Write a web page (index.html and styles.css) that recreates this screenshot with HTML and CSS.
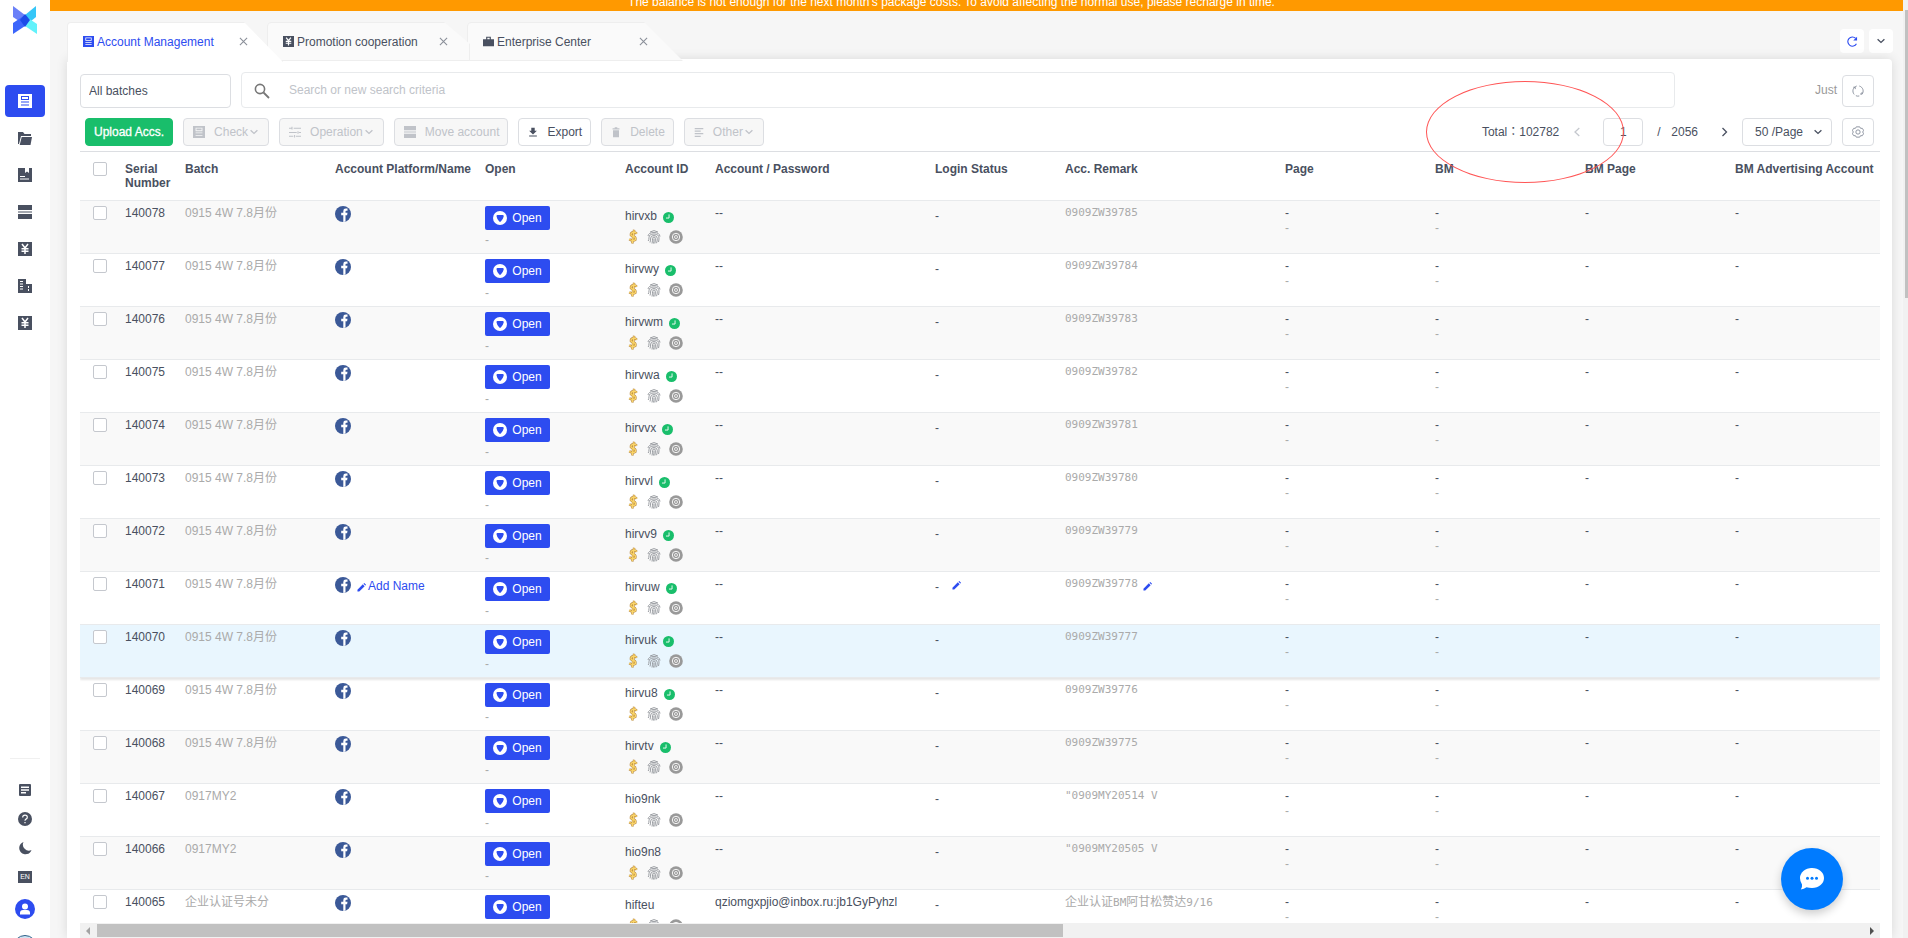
FILE: index.html
```html
<!DOCTYPE html>
<html lang="en">
<head>
    <meta charset="UTF-8">
    <meta name="viewport" content="width=device-width, initial-scale=1.0">
    <title>Account Management</title>
    <link rel="stylesheet" href="styles.css">
</head>
<body>

    <!-- shared icons -->
    <svg class="sprite" aria-hidden="true">
        <symbol id="i-doc" viewBox="0 0 14 14"><path fill="currentColor" fill-rule="evenodd" d="M0 0h14v14H0zM3 2v4h8V2zM3 7.500h8v1H3zM3 10.500h8v1H3zM4 3h6v2H4z"/></symbol>
        <symbol id="i-folder" viewBox="0 0 14 14"><path fill="currentColor" d="M0 1h5l1.500 2H13v2H3L1 13H0zM3.700 6H14l-1.500 8H1.700z"/></symbol>
        <symbol id="i-book" viewBox="0 0 14 14"><path fill="currentColor" fill-rule="evenodd" d="M0 0h7v5l2-1.500L11 5V0h3v14H0zM2 8v1h5V8zM2 10.500v1h9v-1z"/></symbol>
        <symbol id="i-stack" viewBox="0 0 14 14"><path fill="currentColor" d="M0 0h14v5H0zM0 6.500h14v1H0zM0 9h14v5H0z"/></symbol>
        <symbol id="i-yen" viewBox="0 0 14 14"><path fill="currentColor" d="M0 0h14v14H0z"/><path fill="none" stroke="#fff" stroke-width="1.500" d="M4 2l3 4 3-4M7 6v6M3.500 6.800h7M3.500 9.200h7"/></symbol>
        <symbol id="i-build" viewBox="0 0 14 14"><path fill="currentColor" fill-rule="evenodd" d="M0 0h8v5h6v9H0zM2 2v1h3V2zM2 4.500v1h3v-1zM2 7v1h3V7zM2 9.500v1h3v-1zM10 7v2h1V7zM10 10v2h1v-2z"/></symbol>
        <symbol id="i-bag" viewBox="0 0 14 14"><path fill="currentColor" fill-rule="evenodd" d="M4 4V1h6v3h4v9H0V4zM5.500 4h3V2.300h-3z"/></symbol>
        <symbol id="i-list" viewBox="0 0 14 14"><path fill="currentColor" fill-rule="evenodd" d="M2 1h10q1 0 1 1v10q0 1-1 1H2q-1 0-1-1V2q0-1 1-1zM3 3.500V5h8V3.500zM3 6.200v1.500h8V6.200zM3 9v1.500h5V9z"/></symbol>
        <symbol id="i-help" viewBox="0 0 14 14"><circle cx="7" cy="7" r="7" fill="currentColor"/><path fill="none" stroke="#fff" stroke-width="1.200" d="M4.700 5.500q0-2.300 2.300-2.300t2.300 2q0 1.200-1.300 1.900-1 .6-1 1.700M7 10v1.300"/></symbol>
        <symbol id="i-moon" viewBox="0 0 14 14"><path fill="currentColor" d="M5.500 1A6.300 6.300 0 1 0 13.500 9 6 6 0 0 1 5.500 1z"/></symbol>
        <symbol id="i-user" viewBox="0 0 20 20"><circle cx="10" cy="10" r="10" fill="#2d4cf0"/><circle cx="10" cy="7.500" r="3" fill="#fff"/><path fill="#fff" d="M5 15.500v-1.500q0-3 3-3h4q3 0 3 3v1.500z"/></symbol>
        <symbol id="i-close" viewBox="0 0 10 10"><path fill="none" stroke="currentColor" stroke-width="1.200" d="M1 1l8 8M9 1L1 9"/></symbol>
        <symbol id="i-down" viewBox="0 0 8 8"><path fill="none" stroke="currentColor" stroke-width="1.300" d="M.6 2.200L4 5.400l3.400-3.200"/></symbol>
        <symbol id="i-left" viewBox="0 0 8 10"><path fill="none" stroke="currentColor" stroke-width="1.300" d="M6.300 1L2 5l4.300 4"/></symbol>
        <symbol id="i-right" viewBox="0 0 8 10"><path fill="none" stroke="currentColor" stroke-width="1.300" d="M2.500 1L6.500 5l-4 4"/></symbol>
        <symbol id="i-sliders" viewBox="0 0 14 14"><path fill="none" stroke="currentColor" stroke-width="1.200" d="M0 2.500h3M5.500 2.500H14M0 7.500h9M11.500 7.500H14M0 12h5M8 12h6M3.500 1v3M10.500 6v3M6.500 10.500v3"/></symbol>
        <symbol id="i-export" viewBox="0 0 14 14"><path fill="currentColor" d="M5 2h4v3.500h2.500L7 10 2.500 5.500H5zM2.500 11h9v1.300h-9z"/></symbol>
        <symbol id="i-trash" viewBox="0 0 14 14"><path fill="currentColor" d="M3 2.500h2.500V1.500h3v1H11V4H3zM3.500 5h7v8h-7z"/></symbol>
        <symbol id="i-lines" viewBox="0 0 14 14"><path fill="none" stroke="currentColor" stroke-width="1.400" d="M2 3h10M2 6h7M2 9h10M2 12h7"/></symbol>
        <symbol id="i-fb" viewBox="0 0 16 16"><circle cx="8" cy="8" r="8" fill="#3b5998"/><path fill="#fff" d="M8.300 16V9.200H6.200V6.800h2.100V5q0-2.400 2.500-2.400h1.700v2.200h-1.200q-.8 0-.8.8v1.200h2l-.4 2.400h-1.600v6.300z"/></symbol>
        <symbol id="i-browser" viewBox="0 0 14 14"><circle cx="7" cy="7" r="7" fill="#fff"/><path fill="#2d4cf0" d="M4.500 4h5.200q1.500 0 1 1.500Q9.800 9 7.800 10.400q-.8.500-1.500 0Q4 8.600 3.500 5.300 3.400 4 4.500 4z"/></symbol>
        <symbol id="i-clock" viewBox="0 0 10 10"><circle cx="5" cy="5" r="5" fill="#19be6b"/><path fill="none" stroke="#fff" stroke-width=".8" d="M5.500 2.200v3.300H2.700"/></symbol>
        <symbol id="i-dollar" viewBox="0 0 12 16"><path fill="none" stroke="#b98a45" stroke-width="2.600" d="M10 5Q8.500 3 6 3.500T3.800 6.500Q5 7.800 7 8.200T8.500 11.500Q6 13.500 2 11M7.200.8L5.200 15.500"/><path fill="none" stroke="#fbd668" stroke-width="1.400" d="M10 5Q8.500 3 6 3.500T3.800 6.500Q5 7.800 7 8.200T8.500 11.500Q6 13.500 2 11M7.200 1.300L5.200 15"/></symbol>
        <symbol id="i-finger" viewBox="0 0 14 14"><path fill="none" stroke="#909399" stroke-width=".9" d="M3 2Q7-.8 11 2M1 6Q1.500 2.500 7 2.500T13 6.500M1.200 11Q2 10 2 7.500 2 4 7 4t5 4q0 2-.5 4M3 12.500Q3.700 10 3.700 8 3.700 5.500 7 5.500t3.300 3q0 2.500-.8 4.700M5 13.500q.6-3 .6-5Q5.600 7 7 7t1.400 1.500q0 2.500-.6 5M7 8.500q0 3-.5 5"/></symbol>
        <symbol id="i-target" viewBox="0 0 14 14"><circle cx="7" cy="7" r="6.800" fill="#999"/><circle cx="7" cy="7" r="3.700" fill="none" stroke="#fff" stroke-width=".9"/><circle cx="7" cy="7" r="1.500" fill="none" stroke="#fff" stroke-width=".8"/></symbol>
        <symbol id="i-pen" viewBox="0 0 10 10"><path fill="#2d4cf0" d="M.5 7.500l6-6 2 2-6 6H.5zM7.200.9l.9-.9 2 2-.9.9z"/></symbol>
    </svg>

    <aside class="sidebar">
        <svg class="logo" viewBox="0 0 26 30">
            <path fill="#6a80f8" d="M1 1l12 9v10L1 12z"/>
            <path fill="#35c6f8" d="M24 1L13 10v11l11-9z"/>
            <path fill="#3c66fb" d="M1 29l12-8V10L1 18z"/>
            <path fill="#62f2fb" d="M25 29l-12-8V11l12 8z"/>
            <path fill="#1c4be8" d="M13 9l5 6-5 7-5-7z"/>
        </svg>
        <nav class="side-nav">
            <a href="#" class="active" title="Accounts"><svg><use href="#i-doc"/></svg></a>
            <a href="#" title="Files"><svg><use href="#i-folder"/></svg></a>
            <a href="#" title="Records"><svg><use href="#i-book"/></svg></a>
            <a href="#" title="Servers"><svg><use href="#i-stack"/></svg></a>
            <a href="#" title="Promotion"><svg><use href="#i-yen"/></svg></a>
            <a href="#" title="Enterprise"><svg><use href="#i-build"/></svg></a>
            <a href="#" title="Billing"><svg><use href="#i-yen"/></svg></a>
        </nav>
        <div class="side-foot">
            <a href="#" title="Notes"><svg><use href="#i-list"/></svg></a>
            <a href="#" title="Help"><svg><use href="#i-help"/></svg></a>
            <a href="#" title="Dark mode"><svg><use href="#i-moon"/></svg></a>
            <a href="#" title="Language"><span class="lang">EN</span></a>
            <a href="#" class="user" title="Profile"><svg><use href="#i-user"/></svg></a>
            <span class="ring"></span>
        </div>
    </aside>

    <main class="main">
        <div class="banner">The balance is not enough for the next month's package costs. To avoid affecting the normal use, please recharge in time.</div>

        <div class="tabs-bar">
            <div class="tab active">
                <a href="#"><svg><use href="#i-doc"/></svg>Account Management</a>
                <button type="button" aria-label="Close"><svg><use href="#i-close"/></svg></button>
            </div>
            <div class="tab second">
                <a href="#"><svg><use href="#i-yen"/></svg>Promotion cooperation</a>
                <button type="button" aria-label="Close"><svg><use href="#i-close"/></svg></button>
            </div>
            <div class="tab">
                <a href="#"><svg><use href="#i-bag"/></svg>Enterprise Center</a>
                <button type="button" aria-label="Close"><svg><use href="#i-close"/></svg></button>
            </div>
            <div class="tab-tools">
                <button type="button" aria-label="Refresh">
                    <svg class="reload" viewBox="0 0 12 12"><path fill="none" stroke="currentColor" stroke-width="1.200" d="M10.300 8.500A5 5 0 1 1 9.500 2.600"/><path fill="currentColor" d="M11 .8V5H6.800z"/></svg>
                </button>
                <button type="button" aria-label="More"><svg><use href="#i-down"/></svg></button>
            </div>
        </div>

        <section class="panel">
            <div class="search-row">
                <select class="batches" aria-label="Batch">
                    <option>All batches</option>
                </select>
                <label class="search">
                    <svg viewBox="0 0 16 16"><circle cx="6" cy="6" r="4.600" fill="none" stroke="currentColor" stroke-width="1.600"/><path stroke="currentColor" stroke-width="1.800" d="M9.500 9.500l5.500 5.500"/></svg>
                    <input type="text" placeholder="Search or new search criteria">
                </label>
                <span class="just">Just</span>
                <button type="button" class="square tall" aria-label="Sync">
                    <svg viewBox="0 0 14 14"><path fill="none" stroke="currentColor" d="M5.500 1.200A6 6 0 0 0 2.600 11M4.500 12.500a6 6 0 0 0 4 .3M11.400 11.100A6 6 0 0 0 8.500 1.200M1.500 2.600h2.300v2.200M12.800 9.400h-2.300v2.200"/></svg>
                </button>
            </div>

            <div class="toolbar">
                <button type="button" class="btn upload">Upload Accs.</button>
                <button type="button" class="btn wide" disabled><svg><use href="#i-doc"/></svg>Check<svg class="caret"><use href="#i-down"/></svg></button>
                <button type="button" class="btn wide" disabled><svg><use href="#i-sliders"/></svg>Operation<svg class="caret"><use href="#i-down"/></svg></button>
                <button type="button" class="btn wide" disabled><svg><use href="#i-stack"/></svg>Move account</button>
                <button type="button" class="btn"><svg><use href="#i-export"/></svg>Export</button>
                <button type="button" class="btn" disabled><svg><use href="#i-trash"/></svg>Delete</button>
                <button type="button" class="btn" disabled><svg><use href="#i-lines"/></svg>Other<svg class="caret"><use href="#i-down"/></svg></button>

                <div class="pager">
                    <span class="total">Total：102782</span>
                    <button type="button" class="arrow" aria-label="Previous page" disabled><svg><use href="#i-left"/></svg></button>
                    <input type="text" class="page-no" value="1" aria-label="Page number">
                    <span class="slash">/</span>
                    <span class="pages">2056</span>
                    <button type="button" class="arrow" aria-label="Next page"><svg><use href="#i-right"/></svg></button>
                    <div class="page-size">
                        <select aria-label="Page size"><option>50 /Page</option></select>
                        <svg><use href="#i-down"/></svg>
                    </div>
                    <button type="button" class="square" aria-label="Settings">
                        <svg viewBox="0 0 14 14"><path fill="none" stroke="currentColor" d="M5 1h4l1 1.700h2L13.500 5l-1 2 1 2-1.500 2.300h-2L9 13H5l-1-1.700H2L.5 9l1-2-1-2L2 2.700h2z"/><circle cx="7" cy="7" r="2.500" fill="none" stroke="currentColor"/></svg>
                    </button>
                </div>
            </div>

            <div class="table-wrap">
                <table>
                    <colgroup>
                        <col class="w40"><col class="w60"><col class="w150"><col class="w150"><col class="w140"><col class="w90"><col class="w220">
                        <col class="w130"><col class="w220"><col class="w150"><col class="w150"><col class="w150"><col class="w150">
                    </colgroup>
                    <thead>
                        <tr>
                            <th class="check"><input type="checkbox" aria-label="Select all"></th>
                            <th>Serial Number</th>
                            <th>Batch</th>
                            <th>Account Platform/Name</th>
                            <th>Open</th>
                            <th>Account ID</th>
                            <th>Account / Password</th>
                            <th>Login Status</th>
                            <th>Acc. Remark</th>
                            <th>Page</th>
                            <th>BM</th>
                            <th>BM Page</th>
                            <th>BM Advertising Account</th>
                        </tr>
                    </thead>
                    <tbody id="rows"></tbody>
                </table>
            </div>

            <div class="h-scroll">
                <i class="to-left"></i>
                <div class="thumb"></div>
                <i class="to-right"></i>
            </div>
        </section>
    </main>

    <div class="v-scroll"><div class="thumb"></div></div>

    <div class="mark"></div>

    <button type="button" class="chat" aria-label="Chat">
        <svg viewBox="0 0 24 22"><path fill="#fff" d="M12 0c7 0 12 4.500 12 10s-5 10-12 10q-3 0-5.500-.8Q4 21 .8 21.500 2.500 19 2 16.500 0 13.500 0 10 0 4.500 12 0z"/><path fill="#fff" d="M0 10.500C0 4.500 5 0 12 0l4 6z"/><circle cx="7.500" cy="10.200" r="1.500" fill="#007bff"/><circle cx="12" cy="10.200" r="1.500" fill="#007bff"/><circle cx="16.500" cy="10.200" r="1.500" fill="#007bff"/></svg>
    </button>

    <script>
        // serial, batch, account id, verified, password, remark
        const accounts = [
            [140078, '0915 4W 7.8月份', 'hirvxb', true, '--', '0909ZW39785'],
            [140077, '0915 4W 7.8月份', 'hirvwy', true, '--', '0909ZW39784'],
            [140076, '0915 4W 7.8月份', 'hirvwm', true, '--', '0909ZW39783'],
            [140075, '0915 4W 7.8月份', 'hirvwa', true, '--', '0909ZW39782'],
            [140074, '0915 4W 7.8月份', 'hirvvx', true, '--', '0909ZW39781'],
            [140073, '0915 4W 7.8月份', 'hirvvl', true, '--', '0909ZW39780'],
            [140072, '0915 4W 7.8月份', 'hirvv9', true, '--', '0909ZW39779'],
            [140071, '0915 4W 7.8月份', 'hirvuw', true, '--', '0909ZW39778'],
            [140070, '0915 4W 7.8月份', 'hirvuk', true, '--', '0909ZW39777'],
            [140069, '0915 4W 7.8月份', 'hirvu8', true, '--', '0909ZW39776'],
            [140068, '0915 4W 7.8月份', 'hirvtv', true, '--', '0909ZW39775'],
            [140067, '0917MY2', 'hio9nk', false, '--', '"0909MY20514 V'],
            [140066, '0917MY2', 'hio9n8', false, '--', '"0909MY20505 V'],
            [140065, '企业认证号未分', 'hifteu', false, 'qziomgxpjio@inbox.ru:jb1GyPyhzl', '企业认证BM阿甘松赞达9/16']
        ];
        const editing = 140071;
        const current = 140070;

        const icon = (name, cls) => `<svg class="${cls}"><use href="#i-${name}"/></svg>`;
        const pen = icon('pen', 'pen');
        const cjk = text => text.replace(/[\u4e00-\u9fff]+/g, '<span class="cjk">$&</span>');

        document.getElementById('rows').innerHTML = accounts.map(([serial, batch, id, verified, password, remark]) => {
            const edit = serial === editing;
            return `
            <tr class="${serial === current ? 'current' : ''}">
                <td class="check"><input type="checkbox" aria-label="Select ${serial}"></td>
                <td>${serial}</td>
                <td class="muted">${batch}</td>
                <td><div class="platform">${icon('fb', 'fb')}${edit ? `<a href="#">${pen}Add Name</a>` : ''}</div></td>
                <td><button type="button" class="open">${icon('browser', 'browser')}Open</button><div class="sub">-</div></td>
                <td>
                    <div class="acc-id">${id}${verified ? icon('clock', 'clock') : ''}</div>
                    <div class="acc-icons">${icon('dollar', 'dollar')}${icon('finger', 'round')}${icon('target', 'round')}</div>
                </td>
                <td>${password}</td>
                <td><div class="login">-${edit ? pen : ''}</div></td>
                <td class="remark">${cjk(remark)}${edit ? pen : ''}</td>
                <td>-<div class="light">-</div></td>
                <td>-<div class="light">-</div></td>
                <td>-</td>
                <td>-</td>
            </tr>`;
        }).join('');
    </script>

</body>
</html>
```
FILE: styles.css
```css
* {
box-sizing: border-box;
}

body {
margin: 0;
height: 100vh;
display: flex;
overflow: hidden;
background-color: #f6f6f6;
color: #495060;
font-family: "Liberation Sans", Arial, "Noto Sans CJK SC", sans-serif;
font-size: 12px;
line-height: 14px;
}

a {
color: inherit;
text-decoration: none;
}

button,
input,
select {
font: inherit;
color: inherit;
margin: 0;
padding: 0;
}

button {
cursor: pointer;
}

svg {
width: 14px;
height: 14px;
flex: none;
}

.sprite {
position: absolute;
width: 0;
height: 0;
}

/* left sidebar */

.sidebar {
width: 50px;
flex: none;
display: flex;
flex-direction: column;
align-items: center;
background-color: #fff;
}

.logo {
width: 26px;
height: 30px;
margin-top: 5px;
}

.side-nav {
display: flex;
flex-direction: column;
gap: 5px;
margin-top: 50px;
}

.side-nav a {
width: 40px;
height: 32px;
display: flex;
align-items: center;
justify-content: center;
border-radius: 4px;
}

.side-nav .active {
background-color: #2d4cf0;
color: #fff;
}

.side-foot {
width: 30px;
margin-top: auto;
margin-bottom: -21px;
padding-top: 16px;
display: flex;
flex-direction: column;
align-items: center;
border-top: 1px solid #f0f0f0;
}

.side-foot a {
height: 29px;
display: flex;
align-items: center;
}

.side-foot .user {
height: 36px;
}

.user svg {
width: 20px;
height: 20px;
}

.lang {
width: 14px;
background-color: #495060;
color: #fff;
font-size: 7px;
line-height: 12px;
text-align: center;
}

.ring {
width: 24px;
height: 24px;
margin-top: 8px;
border: 1px solid #2c5f88;
border-radius: 50%;
background-color: #cfe3f2;
}

/* main area */

.main {
flex: 1;
min-width: 0;
display: flex;
flex-direction: column;
}

.banner {
height: 11px;
padding-right: 50px;
overflow: hidden;
background-color: #f90;
color: #fff;
line-height: 5px;
text-align: center;
}

.tabs-bar {
display: flex;
height: 48px;
padding: 11px 10px 0 17px;
}

.tab {
position: relative;
z-index: 1;
width: 200px;
display: flex;
align-items: center;
justify-content: space-between;
padding: 2px 19px 0 16px;
}

.tab::before {
content: "";
position: absolute;
z-index: -1;
top: 0;
left: 0;
width: 214px;
height: 100%;
background-color: #fafafa;
border: 1px solid #eee;
border-radius: 4px 0 0 0;
clip-path: polygon(0 0, 177px 0, 100% 100%, 0 100%);
}

.tab.second {
z-index: 2;
}

.tab.second::before {
width: 201px;
clip-path: polygon(0 0, 177px 0, 100% 22px, 100% 100%, 0 100%);
}

.tab.active {
z-index: 3;
color: #2d4cf0;
}

.tab.active::before {
height: 39px;
background-color: #fff;
border-bottom: none;
}

.tab a {
display: flex;
align-items: center;
gap: 3px;
}

.tab a svg {
width: 11px;
height: 11px;
}

.tab button {
display: flex;
border: none;
background: none;
color: #8a8f99;
}

.tab button svg {
width: 9px;
height: 9px;
}

.tab-tools {
display: flex;
gap: 5px;
margin-left: auto;
padding-top: 7px;
}

.tab-tools button {
width: 24px;
height: 24px;
display: flex;
align-items: center;
justify-content: center;
border: none;
border-radius: 4px;
background-color: #fff;
}

.tab-tools svg {
width: 8px;
height: 8px;
}

.tab-tools .reload {
width: 11px;
height: 11px;
color: #2d4cf0;
}

.panel {
flex: 1;
min-height: 0;
display: flex;
flex-direction: column;
margin: 0 11px 0 17px;
padding: 13px 12px 0 13px;
background-color: #fff;
border-radius: 0 4px 0 0;
box-shadow: 0 0 12px rgba(0, 0, 0, 0.12);
}

.search-row {
display: flex;
align-items: center;
height: 36px;
padding-right: 6px;
}

.batches {
appearance: none;
width: 151px;
height: 34px;
margin-top: 2px;
padding: 0 8px;
border: 1px solid #dcdee2;
border-radius: 4px;
background-color: #fff;
}

.search {
flex: 1;
max-width: 1434px;
height: 36px;
margin-left: 10px;
padding: 0 12px;
display: flex;
align-items: center;
gap: 19px;
border: 1px solid #e8eaec;
border-radius: 4px;
color: #777;
}

.search svg {
width: 16px;
height: 16px;
margin-top: 2px;
}

.search input {
flex: 1;
border: none;
outline: none;
}

.search input::placeholder {
color: #c0c3c9;
}

.just {
margin-left: auto;
margin-right: 5px;
color: #999;
}

.square {
width: 32px;
height: 28px;
display: flex;
align-items: center;
justify-content: center;
border: 1px solid #dcdee2;
border-radius: 4px;
background-color: #fff;
color: #808695;
}

.square.tall {
height: 32px;
margin-top: 2px;
}

.square svg {
width: 12px;
height: 12px;
}

/* toolbar */

.toolbar {
display: flex;
align-items: center;
gap: 10px;
padding: 10px 6px 5px 5px;
border-bottom: 1px solid #dcdee2;
}

.btn {
height: 28px;
display: flex;
align-items: center;
padding: 0 8px;
border: 1px solid #dcdee2;
border-radius: 4px;
background-color: #fff;
white-space: nowrap;
}

.btn svg {
width: 12px;
height: 12px;
margin-right: 8px;
}

.btn.wide {
padding-left: 9px;
}

.btn.wide svg {
margin-right: 9px;
}

.btn svg.caret {
width: 8px;
height: 8px;
margin: 0 2px;
}

.btn:disabled {
background-color: #f7f7f7;
color: #c0c3c9;
cursor: default;
}

.btn.upload {
border-color: #19be6b;
background-color: #19be6b;
color: #fff;
-webkit-text-stroke: 0.3px #fff;
}

.pager {
display: flex;
align-items: center;
margin-left: auto;
}

.total {
font-family: "Liberation Sans", Arial, "Noto Sans CJK TC", sans-serif;
}

.arrow {
width: 36px;
height: 28px;
display: flex;
align-items: center;
justify-content: center;
border: none;
background: none;
}

.arrow:disabled {
color: #c5c8ce;
}

.arrow svg {
width: 8px;
height: 10px;
}

.page-no {
width: 40px;
height: 28px;
margin-left: 8px;
border: 1px solid #dcdee2;
border-radius: 4px;
text-align: center;
}

.slash {
width: 28px;
padding-left: 14px;
}

.pages {
margin-right: 8px;
}

.page-size {
position: relative;
margin-right: 10px;
}

.page-size select {
appearance: none;
width: 90px;
height: 28px;
padding: 0 12px;
border: 1px solid #dcdee2;
border-radius: 4px;
background-color: #fff;
}

.page-size svg {
position: absolute;
top: 10px;
right: 10px;
width: 8px;
height: 8px;
}

/* accounts table */

.table-wrap {
flex: 1;
min-height: 0;
overflow: hidden;
}

table {
width: 100%;
table-layout: fixed;
border-collapse: separate;
border-spacing: 0;
}

.w40 { width: 40px; }
.w60 { width: 60px; }
.w90 { width: 90px; }
.w130 { width: 130px; }
.w140 { width: 140px; }
.w150 { width: 150px; }
.w220 { width: 220px; }

th,
td {
padding: 5px 0 0 5px;
border-bottom: 1px solid #e8eaec;
text-align: left;
vertical-align: top;
}

th {
height: 49px;
padding-top: 10px;
}

td {
height: 53px;
white-space: nowrap;
}

tbody tr:nth-child(odd) {
background-color: #f9f9f9;
}

tbody tr.current {
position: relative;
background-color: #e9f6fe;
box-shadow: 0 2px 2px rgba(0, 0, 0, 0.1);
}

.check {
padding-left: 13px;
}

input[type="checkbox"] {
appearance: none;
display: block;
width: 14px;
height: 14px;
border: 1px solid #c5c8ce;
border-radius: 2px;
background-color: #fff;
}

.muted,
.light,
.sub {
color: #aaa;
}

.platform {
display: flex;
align-items: center;
gap: 6px;
color: #2d4cf0;
}

.fb {
width: 16px;
height: 16px;
}

.pen {
width: 9px;
height: 9px;
}

.platform a {
padding-top: 2px;
}

.platform .pen {
margin-right: 2px;
vertical-align: -2px;
}

.open {
width: 65px;
height: 24px;
display: flex;
align-items: center;
justify-content: center;
gap: 5px;
border: none;
border-radius: 2px;
background-color: #2d4cf0;
color: #fff;
}

.sub {
margin-top: 3px;
}

.acc-id {
display: flex;
align-items: center;
gap: 6px;
padding-top: 3px;
}

.clock {
width: 11px;
height: 11px;
margin-top: 2px;
}

.acc-icons {
display: flex;
align-items: center;
gap: 8px;
margin-top: 6px;
padding-left: 2px;
}

.dollar {
width: 12px;
height: 15px;
}

.acc-icons .round {
width: 14px;
height: 14px;
}

.login {
padding-top: 3px;
}

.login .pen {
margin-left: 13px;
vertical-align: 1px;
}

.remark {
color: #aaa;
font-family: "DejaVu Sans Mono", "Liberation Mono", "Noto Sans CJK SC", monospace;
font-size: 11px;
}

.remark .pen {
margin-left: 5px;
vertical-align: -4px;
}

.cjk {
font-size: 12px;
}

.light {
margin-top: 1px;
}

/* scrollbars */

.h-scroll {
flex: none;
display: flex;
align-items: center;
justify-content: space-between;
height: 15px;
padding: 0 6px;
background-color: #f1f1f1;
}

.h-scroll .thumb {
width: 54%;
height: 13px;
margin-left: 7px;
margin-right: auto;
background-color: #c1c1c1;
}

.to-left,
.to-right {
border: 4px solid transparent;
}

.to-left {
border-left: none;
border-right-color: #a3a3a3;
}

.to-right {
border-right: none;
border-left-color: #505050;
}

.v-scroll {
width: 5px;
flex: none;
padding: 10px 0 0 2px;
background-color: #f1f1f1;
}

.v-scroll .thumb {
height: 31%;
background-color: #c1c1c1;
}

/* overlays */

.mark {
position: absolute;
top: 81px;
right: 284px;
z-index: 5;
width: 198px;
height: 102px;
border: 1px solid #f55;
border-radius: 50%;
pointer-events: none;
}

.chat {
position: fixed;
right: 65px;
bottom: 28px;
z-index: 6;
width: 62px;
height: 62px;
display: flex;
align-items: center;
justify-content: center;
border: none;
border-radius: 50%;
background-color: #007bff;
box-shadow: 0 4px 10px rgba(0, 0, 0, 0.2);
}

.chat svg {
width: 24px;
height: 22px;
}
```
